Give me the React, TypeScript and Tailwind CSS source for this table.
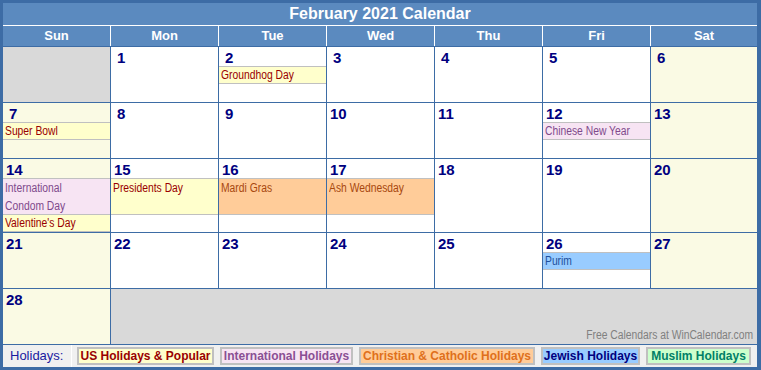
type Kind = 'us' | 'intl' | 'chr' | 'jew'

type Ev = { t: string; k: Kind; tall?: boolean }
type Day = { n: number; ev?: Ev[] } | null

const evStyle: Record<Kind, string> = {
  us: 'bg-[#ffffcc] text-[#990000]',
  intl: 'bg-[#f7e4f3] text-[#7f4a8c]',
  chr: 'bg-[#ffcc99] text-[#a8480f]',
  jew: 'bg-[#99ccff] text-[#1d4f9c]',
}

const weeks: Day[][] = [
  [null, { n: 1 }, { n: 2, ev: [{ t: 'Groundhog Day', k: 'us' }] }, { n: 3 }, { n: 4 }, { n: 5 }, { n: 6 }],
  [
    { n: 7, ev: [{ t: 'Super Bowl', k: 'us' }] },
    { n: 8 },
    { n: 9 },
    { n: 10 },
    { n: 11 },
    { n: 12, ev: [{ t: 'Chinese New Year', k: 'intl' }] },
    { n: 13 },
  ],
  [
    {
      n: 14,
      ev: [
        { t: 'International Condom Day', k: 'intl', tall: true },
        { t: "Valentine's Day", k: 'us' },
      ],
    },
    { n: 15, ev: [{ t: 'Presidents Day', k: 'us', tall: true }] },
    { n: 16, ev: [{ t: 'Mardi Gras', k: 'chr', tall: true }] },
    { n: 17, ev: [{ t: 'Ash Wednesday', k: 'chr', tall: true }] },
    { n: 18 },
    { n: 19 },
    { n: 20 },
  ],
  [
    { n: 21 },
    { n: 22 },
    { n: 23 },
    { n: 24 },
    { n: 25 },
    { n: 26, ev: [{ t: 'Purim', k: 'jew' }] },
    { n: 27 },
  ],
]

const days = ['Sun', 'Mon', 'Tue', 'Wed', 'Thu', 'Fri', 'Sat']

const legend = [
  { t: 'US Holidays & Popular', c: 'w-[137px] bg-[#ffffcc] text-[#990000]' },
  { t: 'International Holidays', c: 'w-[133px] bg-[#f7e4f3] text-[#8a4f94]' },
  { t: 'Christian & Catholic Holidays', c: 'w-[176px] bg-[#ffcc99] text-[#e0701c]' },
  { t: 'Jewish Holidays', c: 'w-[99px] bg-[#99ccff] text-[#000080]' },
  { t: 'Muslim Holidays', c: 'w-[105px] bg-[#ccffcc] text-[#008066]' },
]

// no narrow font installed, so squeeze Arial to roughly Arial Narrow width
const narrow = 'inline-block origin-left scale-x-[0.86]'

function Cell({ day, col }: { day: Day; col: number }) {
  if (!day) return <div className="bg-[#d9d9d9]" />
  const weekend = col === 0 || col === 6
  return (
    <div className={`flex flex-col overflow-hidden ${weekend ? 'bg-[#fafae4]' : 'bg-white'}`}>
      <div
        className={`h-[19px] shrink-0 pt-[2px] text-[15px] font-bold leading-[17px] text-[#000080] ${
          day.n < 10 ? 'pl-[6px]' : 'pl-[3px]'
        }`}
      >
        {day.n}
      </div>
      {day.ev?.map((e, i) => (
        <div
          key={e.t}
          className={`shrink-0 border-y border-[#c0c0c0] pl-[2px] text-[12px] ${
            e.tall ? 'h-[37px] leading-[18px]' : 'h-[18px] leading-[16px]'
          } ${i > 0 ? '-mt-px' : ''} ${evStyle[e.k]}`}
        >
          <span className={`${narrow} ${e.tall ? 'w-[100px]' : 'whitespace-nowrap'}`}>{e.t}</span>
        </div>
      ))}
    </div>
  )
}

export default function App() {
  return (
    <div className="flex h-[370px] w-[761px] flex-col bg-[#3d6ca5] pt-[3px] pr-[4px] pb-[3px] pl-[3px] font-['Liberation_Sans',Arial,sans-serif]">
      <div className="h-[22px] bg-[#5b8abf] text-center text-[16px] font-bold leading-[22px] text-white">
        February 2021 Calendar
      </div>
      <div className="h-px bg-white" />
      <div className="grid h-[20px] grid-cols-[107px_107px_107px_107px_107px_107px_1fr] gap-px bg-white">
        {days.map((d) => (
          <div key={d} className="bg-[#5b8abf] text-center text-[13px] font-bold leading-[20px] text-white">
            {d}
          </div>
        ))}
      </div>
      <div className="mt-px grid grid-cols-[107px_107px_107px_107px_107px_107px_1fr] grid-rows-[55px_55px_73px_55px_55px] gap-px">
        {weeks.map((w, wi) => w.map((d, ci) => <Cell key={`${wi}-${ci}`} day={d} col={ci} />))}
        <Cell day={{ n: 28 }} col={0} />
        <div className="col-span-6 flex items-end justify-end bg-[#d9d9d9] pr-[4px] pb-[1px] text-[12px] leading-[16px] text-[#808080]">
          <span className="inline-block origin-right scale-x-[0.86] whitespace-nowrap">
            Free Calendars at WinCalendar.com
          </span>
        </div>
      </div>
      <div className="mt-px flex h-[22px] items-center bg-[#f0f0f0]">
        <div className="w-[68px] pl-[7px] text-[13px] leading-[22px] text-[#1a1aa0]">Holidays:</div>
        <div className="h-full w-px bg-white" />
        <div className="ml-[5px] flex gap-[6px]">
          {legend.map((l) => (
            <div
              key={l.t}
              className={`h-[18px] border-2 border-[#c0c0c0] text-center text-[12px] font-bold leading-[14px] ${l.c}`}
            >
              {l.t}
            </div>
          ))}
        </div>
      </div>
    </div>
  )
}
